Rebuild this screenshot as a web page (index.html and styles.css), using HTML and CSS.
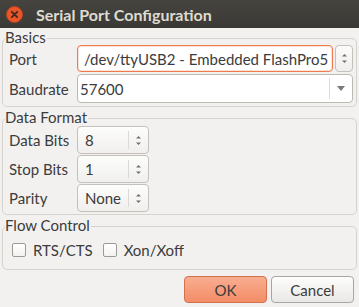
FILE: index.html
```html
<!DOCTYPE html>
<html lang="en">
<head>
    <meta charset="UTF-8">
    <title>Serial Port Configuration</title>
    <link rel="stylesheet" href="styles.css">
</head>
<body>
    <div class="titlebar">
        <span class="close-btn">
            <svg width="17" height="17" viewBox="0 0 17 17">
                <circle cx="8.5" cy="8.5" r="8" fill="#e8562a" stroke="#b8431f" stroke-width="1"/>
                <path d="M5.8 5.8 L11.2 11.2 M11.2 5.8 L5.8 11.2" stroke="#3b2a22" stroke-width="1.8" stroke-linecap="round"/>
            </svg>
        </span>
        <span class="title">Serial Port Configuration</span>
    </div>

    <div class="dialog">
        <div class="group">
            <div class="group-title"><span>Basics</span></div>
            <div class="group-body basics">
                <div class="form-row tall">
                    <span class="field-label">Port</span>
                    <div class="port-field">
                        <div class="entry focused">/dev/ttyUSB2 - Embedded FlashPro5</div>
                        <div class="spin-btn">
                            <svg width="7" height="13" viewBox="0 0 7 13">
                                <polygon points="1,4.5 3.5,2 6,4.5" fill="#707070"/>
                                <polygon points="1,8.5 3.5,11 6,8.5" fill="#707070"/>
                            </svg>
                        </div>
                    </div>
                </div>
                <div class="form-row tall">
                    <span class="field-label">Baudrate</span>
                    <div class="combo">
                        <div class="combo-text">57600</div>
                        <div class="combo-arrow">
                            <svg width="8" height="5" viewBox="0 0 8 5">
                                <polygon points="0,0 8,0 4,5" fill="#7a7a7a"/>
                            </svg>
                        </div>
                    </div>
                </div>
            </div>
        </div>

        <div class="group">
            <div class="group-title"><span>Data Format</span></div>
            <div class="group-body format">
                <div class="form-row">
                    <span class="field-label">Data Bits</span>
                    <div class="spinbox">
                        <span class="spin-value">8</span>
                        <span class="spin-arrows">
                            <svg width="7" height="13" viewBox="0 0 7 13">
                                <polygon points="1,4.5 3.5,2 6,4.5" fill="#707070"/>
                                <polygon points="1,8.5 3.5,11 6,8.5" fill="#707070"/>
                            </svg>
                        </span>
                    </div>
                </div>
                <div class="form-row">
                    <span class="field-label">Stop Bits</span>
                    <div class="spinbox">
                        <span class="spin-value">1</span>
                        <span class="spin-arrows">
                            <svg width="7" height="13" viewBox="0 0 7 13">
                                <polygon points="1,4.5 3.5,2 6,4.5" fill="#707070"/>
                                <polygon points="1,8.5 3.5,11 6,8.5" fill="#707070"/>
                            </svg>
                        </span>
                    </div>
                </div>
                <div class="form-row">
                    <span class="field-label">Parity</span>
                    <div class="spinbox">
                        <span class="spin-value">None</span>
                        <span class="spin-arrows">
                            <svg width="7" height="13" viewBox="0 0 7 13">
                                <polygon points="1,4.5 3.5,2 6,4.5" fill="#707070"/>
                                <polygon points="1,8.5 3.5,11 6,8.5" fill="#707070"/>
                            </svg>
                        </span>
                    </div>
                </div>
            </div>
        </div>

        <div class="group">
            <div class="group-title"><span>Flow Control</span></div>
            <div class="group-body flow">
                <label class="check"><span class="checkbox"></span>RTS/CTS</label>
                <label class="check"><span class="checkbox"></span>Xon/Xoff</label>
            </div>
        </div>

        <div class="buttons">
            <button class="btn btn-ok">OK</button>
            <button class="btn">Cancel</button>
        </div>
    </div>
</body>
</html>
```

FILE: styles.css
```css
body {
    width: 359px;
    height: 307px;
    margin: 0;
    overflow: hidden;
    background: #f2f1f0;
    color: #3c3c3c;
    font-family: Lato, "Open Sans", sans-serif;
    font-size: 15px;
}

.titlebar {
    height: 28px;
    display: flex;
    align-items: center;
    background: linear-gradient(#45443f, #3a3935);
    color: #dfdbd2;
}

.close-btn {
    display: flex;
    margin: 1px 13px 0 6px;
}

.title {
    font-weight: bold;
    font-size: 16px;
}

.dialog {
    padding: 2px 2px 0 2px;
}

.group + .group {
    margin-top: 3px;
}

.group-title {
    line-height: 15px;
    height: 15px;
}

.group-title span {
    display: inline-block;
    background: #f2f1f0;
    margin-left: 3px;
    padding-right: 1px;
}

.group-body {
    border: 1px solid #d6d3cf;
    border-radius: 5px;
    margin-top: -7px;
}

.basics {
    padding: 6px 3px 4px 6px;
    display: flex;
    flex-direction: column;
    gap: 3px;
}

.format {
    padding: 8px 3px 3px 6px;
    display: flex;
    flex-direction: column;
    gap: 3px;
}

.form-row {
    display: flex;
    align-items: center;
    height: 26px;
}

.form-row.tall {
    height: 27px;
}

.field-label {
    width: 68px;
    flex: none;
}

.port-field {
    flex: 1;
    display: flex;
    gap: 2px;
    height: 100%;
}

.entry {
    flex: 1;
    display: flex;
    align-items: center;
    padding-left: 6px;
    background: #ffffff;
    border: 1px solid #b5b2ac;
    border-radius: 4px;
    white-space: nowrap;
    overflow: hidden;
}

.entry.focused {
    border-color: #ef7a4f;
    box-shadow: inset 0 0 0 1px #fbe2d7;
}

.spin-btn {
    width: 16px;
    display: flex;
    align-items: center;
    justify-content: center;
    border: 1px solid #c4c1bb;
    border-radius: 4px;
    background: linear-gradient(#fbfbfa, #efeeec);
}

.combo {
    flex: 1;
    height: 100%;
    display: flex;
    border: 1px solid #bcb9b3;
    border-radius: 4px;
    background: #ffffff;
}

.combo-text {
    flex: 1;
    display: flex;
    align-items: center;
    padding-left: 2px;
}

.combo-arrow {
    width: 22px;
    display: flex;
    align-items: center;
    justify-content: center;
    border-left: 1px solid #dedbd7;
    margin: 3px 0;
    background: #ffffff;
}

.spinbox {
    width: 70px;
    height: 100%;
    display: flex;
    border: 1px solid #c4c1bb;
    border-radius: 4px;
    background: linear-gradient(#fdfdfc, #f0efed);
}

.spin-value {
    flex: 1;
    display: flex;
    align-items: center;
    padding-left: 7px;
}

.spin-arrows {
    width: 19px;
    display: flex;
    align-items: center;
    justify-content: center;
    border-left: 1px solid #dcd9d5;
    margin: 4px 0;
}

.flow {
    padding: 10px 0 6px 9px;
    display: flex;
    align-items: center;
    height: 26px;
    gap: 10px;
}

.check {
    display: flex;
    align-items: center;
    gap: 7px;
}

.checkbox {
    width: 12px;
    height: 12px;
    border: 1px solid #9d9a95;
    border-radius: 2px;
    background: linear-gradient(#ffffff, #f3f2f0);
}

.buttons {
    display: flex;
    justify-content: flex-end;
    gap: 4px;
    margin: 6px 3px 0 0;
}

.btn {
    width: 83px;
    height: 27px;
    font-family: inherit;
    font-size: 15px;
    color: #3c3c3c;
    border: 1px solid #a9a6a1;
    border-radius: 4px;
    background: linear-gradient(#fdfdfc, #e9e8e6);
    padding: 0;
}

.btn-ok {
    border-color: #d2714e;
    background: linear-gradient(#f9ad91, #f38d67);
}
```
